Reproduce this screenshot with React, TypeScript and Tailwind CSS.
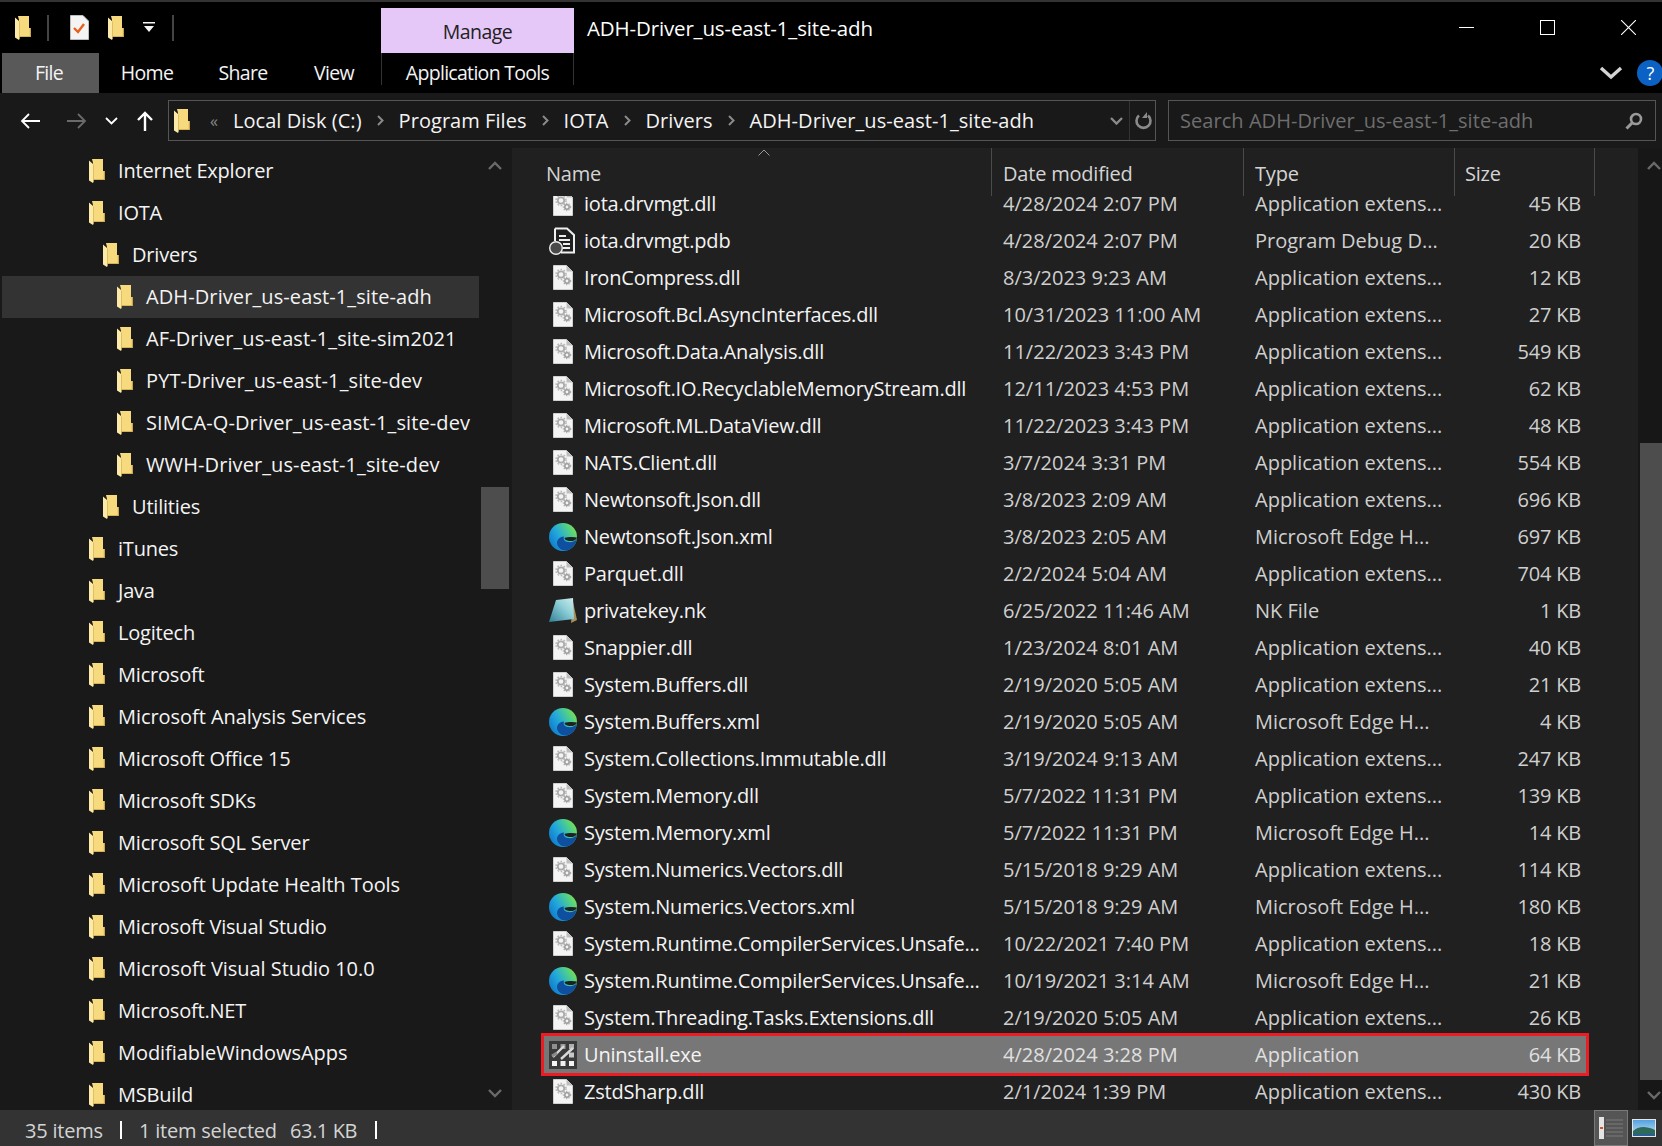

import React from "react";

const Folder = ({ className = "" }: { className?: string }) => (
  <svg viewBox="0 0 16 24" className={className}>
    <path d="M3 0H14V12H16V21H4V4Z" fill="#f8da7e" />
    <path d="M14 12H16V21H4V20.2H14.8V12Z" fill="#c9a64e" />
    <path d="M0 1.5L4 5V24L0 21.5Z" fill="#fdeaa8" />
    <path d="M4 5V24L4.8 22.5V6Z" fill="#d8b85e" />
  </svg>
);

const Dll = () => (
  <svg viewBox="0 0 20 25" className="w-[20px] h-[25px]">
    <path d="M0.5 0.5H13.5L19.5 6.5V24.5H0.5Z" fill="#f4f4f4" stroke="#d0d0d0" />
    <path d="M13.5 0.5V6.5H19.5Z" fill="#bdbdbd" />
    <circle cx="8" cy="9.5" r="3.2" fill="none" stroke="#ababab" strokeWidth="1.8" />
    <circle cx="8" cy="9.5" r="5" fill="none" stroke="#b8b8b8" strokeWidth="1.6" strokeDasharray="1.6 1.6" />
    <circle cx="14" cy="16" r="2.2" fill="none" stroke="#9a9a9a" strokeWidth="1.5" />
    <circle cx="14" cy="16" r="3.6" fill="none" stroke="#acacac" strokeWidth="1.3" strokeDasharray="1.3 1.3" />
  </svg>
);

const Pdb = () => (
  <svg viewBox="0 0 28 28" className="w-[28px] h-[28px]">
    <path d="M6 1.5H18L25 8V25.5H12" fill="#202020" stroke="#efefef" strokeWidth="2" />
    <path d="M6 1.5V14" stroke="#efefef" strokeWidth="2" />
    <path d="M10 9H17M10 13H21M14 17H21M14 21H21" stroke="#efefef" strokeWidth="2" />
    <circle cx="7" cy="21" r="6.3" fill="#4a4a4a" stroke="#efefef" strokeWidth="1.4" />
  </svg>
);

const Edge = () => (
  <svg viewBox="0 0 28 28" className="w-[28px] h-[28px]">
    <defs>
      <linearGradient id="edgeA" x1="0" y1="0.9" x2="1" y2="0.3">
        <stop offset="0" stopColor="#0c6fc6" />
        <stop offset="0.45" stopColor="#22a8dc" />
        <stop offset="0.8" stopColor="#4fcf8a" />
        <stop offset="1" stopColor="#7ade52" />
      </linearGradient>
    </defs>
    <circle cx="14" cy="14" r="14" fill="url(#edgeA)" />
    <path d="M28 15.5C26 19 22 19.5 18.5 19C15.5 18.5 14 16.5 15 13.5C11 13.5 8 16.5 8 20C8 24 12.5 28 17 27.5C22 27 27 22.5 28 15.5Z" fill="#0f4f9f" />
    <path d="M28 14.5C27 17.5 23.5 18.5 20 18C17.5 17.5 15.5 16.5 15.5 15C18 14 24 13.5 28 14.5Z" fill="#202020" />
  </svg>
);

const Nk = () => (
  <svg viewBox="0 0 28 26" className="w-[28px] h-[26px]">
    <defs>
      <linearGradient id="nkA" x1="0" y1="1" x2="1" y2="0">
        <stop offset="0" stopColor="#2f7f96" />
        <stop offset="0.6" stopColor="#8fd0d8" />
        <stop offset="1" stopColor="#d2ecee" />
      </linearGradient>
    </defs>
    <path d="M24 4L28 22L22 25Z" fill="#a8905e" />
    <path d="M7 2L24 0L25 21L0 24Z" fill="url(#nkA)" />
  </svg>
);

const Uninstall = () => (
  <svg viewBox="0 0 28 28" className="w-[28px] h-[28px]">
    <rect width="28" height="28" fill="#3a3a3a" />
    <rect x="3" y="3" width="5" height="5" fill="#8f8f8f" />
    <rect x="11.5" y="3" width="5" height="5" fill="#9a9a9a" />
    <rect x="20" y="3" width="5" height="5" fill="#b0b0b0" />
    <rect x="20" y="11.5" width="5" height="5" fill="#c8c8c8" />
    <rect x="3" y="20" width="5" height="5" fill="#f4f4f4" />
    <rect x="11.5" y="20" width="5" height="5" fill="#f0f0f0" />
    <rect x="20" y="20" width="5" height="5" fill="#f4f4f4" />
    <path d="M4 16L15 5M12 18L24 7" stroke="#d8d8d8" strokeWidth="2.4" />
    <path d="M3 15L8 12" stroke="#8a8a8a" strokeWidth="3" />
  </svg>
);

type Kind = "dll" | "pdb" | "edge" | "nk" | "exe";
const files: [Kind, string, string, string, string][] = [
  ["dll", "iota.drvmgt.dll", "4/28/2024 2:07 PM", "Application extens...", "45 KB"],
  ["pdb", "iota.drvmgt.pdb", "4/28/2024 2:07 PM", "Program Debug D...", "20 KB"],
  ["dll", "IronCompress.dll", "8/3/2023 9:23 AM", "Application extens...", "12 KB"],
  ["dll", "Microsoft.Bcl.AsyncInterfaces.dll", "10/31/2023 11:00 AM", "Application extens...", "27 KB"],
  ["dll", "Microsoft.Data.Analysis.dll", "11/22/2023 3:43 PM", "Application extens...", "549 KB"],
  ["dll", "Microsoft.IO.RecyclableMemoryStream.dll", "12/11/2023 4:53 PM", "Application extens...", "62 KB"],
  ["dll", "Microsoft.ML.DataView.dll", "11/22/2023 3:43 PM", "Application extens...", "48 KB"],
  ["dll", "NATS.Client.dll", "3/7/2024 3:31 PM", "Application extens...", "554 KB"],
  ["dll", "Newtonsoft.Json.dll", "3/8/2023 2:09 AM", "Application extens...", "696 KB"],
  ["edge", "Newtonsoft.Json.xml", "3/8/2023 2:05 AM", "Microsoft Edge H...", "697 KB"],
  ["dll", "Parquet.dll", "2/2/2024 5:04 AM", "Application extens...", "704 KB"],
  ["nk", "privatekey.nk", "6/25/2022 11:46 AM", "NK File", "1 KB"],
  ["dll", "Snappier.dll", "1/23/2024 8:01 AM", "Application extens...", "40 KB"],
  ["dll", "System.Buffers.dll", "2/19/2020 5:05 AM", "Application extens...", "21 KB"],
  ["edge", "System.Buffers.xml", "2/19/2020 5:05 AM", "Microsoft Edge H...", "4 KB"],
  ["dll", "System.Collections.Immutable.dll", "3/19/2024 9:13 AM", "Application extens...", "247 KB"],
  ["dll", "System.Memory.dll", "5/7/2022 11:31 PM", "Application extens...", "139 KB"],
  ["edge", "System.Memory.xml", "5/7/2022 11:31 PM", "Microsoft Edge H...", "14 KB"],
  ["dll", "System.Numerics.Vectors.dll", "5/15/2018 9:29 AM", "Application extens...", "114 KB"],
  ["edge", "System.Numerics.Vectors.xml", "5/15/2018 9:29 AM", "Microsoft Edge H...", "180 KB"],
  ["dll", "System.Runtime.CompilerServices.Unsafe...", "10/22/2021 7:40 PM", "Application extens...", "18 KB"],
  ["edge", "System.Runtime.CompilerServices.Unsafe...", "10/19/2021 3:14 AM", "Microsoft Edge H...", "21 KB"],
  ["dll", "System.Threading.Tasks.Extensions.dll", "2/19/2020 5:05 AM", "Application extens...", "26 KB"],
  ["exe", "Uninstall.exe", "4/28/2024 3:28 PM", "Application", "64 KB"],
  ["dll", "ZstdSharp.dll", "2/1/2024 1:39 PM", "Application extens...", "430 KB"],
];

const tree: [string, string][] = [
  ["pl-[87px]", "Internet Explorer"],
  ["pl-[87px]", "IOTA"],
  ["pl-[101px]", "Drivers"],
  ["pl-[115px] tracking-[0.1px]", "ADH-Driver_us-east-1_site-adh"],
  ["pl-[115px] tracking-[0.1px]", "AF-Driver_us-east-1_site-sim2021"],
  ["pl-[115px] tracking-[0.1px]", "PYT-Driver_us-east-1_site-dev"],
  ["pl-[115px] tracking-[0.1px]", "SIMCA-Q-Driver_us-east-1_site-dev"],
  ["pl-[115px] tracking-[0.1px]", "WWH-Driver_us-east-1_site-dev"],
  ["pl-[101px]", "Utilities"],
  ["pl-[87px]", "iTunes"],
  ["pl-[87px]", "Java"],
  ["pl-[87px]", "Logitech"],
  ["pl-[87px]", "Microsoft"],
  ["pl-[87px] tracking-[-0.05px]", "Microsoft Analysis Services"],
  ["pl-[87px]", "Microsoft Office 15"],
  ["pl-[87px]", "Microsoft SDKs"],
  ["pl-[87px]", "Microsoft SQL Server"],
  ["pl-[87px] tracking-[-0.05px]", "Microsoft Update Health Tools"],
  ["pl-[87px]", "Microsoft Visual Studio"],
  ["pl-[87px] tracking-[-0.05px]", "Microsoft Visual Studio 10.0"],
  ["pl-[87px]", "Microsoft.NET"],
  ["pl-[87px] tracking-[-0.05px]", "ModifiableWindowsApps"],
  ["pl-[87px]", "MSBuild"],
];

const Chevron = ({ up, color = "#6a6a6a" }: { up?: boolean; color?: string }) => (
  <svg viewBox="0 0 14 9" className="w-[14px] h-[9px]">
    <path d={up ? "M1 8L7 2L13 8" : "M1 1L7 7L13 1"} fill="none" stroke={color} strokeWidth="2.4" />
  </svg>
);

const Crumb = () => (
  <svg viewBox="0 0 7 11" className="w-[7px] h-[11px] mx-[15px]">
    <path d="M1 1L5.5 5.5L1 10" fill="none" stroke="#8a8a8a" strokeWidth="2" />
  </svg>
);

const Icon = ({ kind }: { kind: Kind }) =>
  kind === "dll" ? <Dll /> : kind === "pdb" ? <Pdb /> : kind === "edge" ? <Edge /> : kind === "nk" ? <Nk /> : <Uninstall />;

export default function App() {
  return (
    <div className="w-[1662px] h-[1146px] overflow-hidden bg-black flex flex-col text-[20px] tracking-[-0.2px] font-['Open_Sans','Noto_Sans',sans-serif] text-[#f4f4f4] border-t-2 border-[#333333]">
      {/* title row */}
      <div className="h-[51px] flex items-start shrink-0">
        <div className="w-[381px] h-[51px] flex items-center pl-[15px]">
          <Folder className="w-[16px] h-[24px]" />
          <div className="ml-[16px] w-[2px] h-[26px] bg-[#444444]" />
          <svg viewBox="0 0 19 25" className="ml-[21px] w-[19px] h-[25px]">
            <path d="M0.5 0.5H13L18.5 6V24.5H0.5Z" fill="#f4f4f4" stroke="#bdbdbd" />
            <path d="M4 13L8 17L14 9" fill="none" stroke="#e8601c" strokeWidth="2.4" />
          </svg>
          <Folder className="ml-[19px] w-[16px] h-[24px]" />
          <svg viewBox="0 0 12 11" className="ml-[19px] w-[12px] h-[11px]">
            <path d="M0 0H12V1.5H0ZM1 4H11L6 10Z" fill="#f4f4f4" />
          </svg>
          <div className="ml-[17px] w-[2px] h-[26px] bg-[#444444]" />
        </div>
        <div className="mt-[6px] w-[193px] h-[45px] bg-[#e6c8f8] text-[#222222] flex items-center justify-center pt-[2px] text-[19.5px] tracking-[-0.55px]">Manage</div>
        <div className="ml-[13px] mt-[11px] text-white text-[20.5px] tracking-[-0.15px]">ADH-Driver_us-east-1_site-adh</div>
        <div className="ml-auto flex items-center h-[51px] pr-[26px]">
          <div className="w-[15px] h-[1.5px] bg-white" />
          <div className="ml-[66px] w-[15px] h-[15px] border border-white" />
          <svg viewBox="0 0 15 15" className="ml-[66px] w-[15px] h-[15px]">
            <path d="M0 0L15 15M15 0L0 15" stroke="#fff" strokeWidth="1.1" />
          </svg>
        </div>
      </div>
      {/* tabs */}
      <div className="h-[40px] flex items-stretch shrink-0 pl-[2px] text-[19.5px] tracking-[-0.7px]">
        <div className="w-[97px] bg-[#595959] flex items-center justify-center pr-[3px]">File</div>
        <div className="w-[94px] flex items-center justify-center pl-[2px]">Home</div>
        <div className="w-[100px] flex items-center justify-center">Share</div>
        <div className="w-[82px] flex items-center justify-center">View</div>
        <div className="ml-[6px] w-[193px] h-[32px] mb-auto border-x border-[#333333] flex items-center justify-center pt-[7px]">Application Tools</div>
        <div className="ml-auto flex items-center gap-[14px] pr-0 mr-[-1px]">
          <svg viewBox="0 0 24 16" className="w-[24px] h-[16px]">
            <path d="M2 3L12 12L22 3" fill="none" stroke="#d4d4d4" strokeWidth="3.4" />
          </svg>
          <div className="w-[26px] h-[26px] rounded-full bg-[#0b62c4] text-white flex items-center justify-center text-[18px]">?</div>
        </div>
      </div>
      {/* address row */}
      <div className="h-[55px] bg-[#191919] flex items-center shrink-0 pl-[20px] pr-[6px] tracking-[0.05px]">
        <svg viewBox="0 0 20 16" className="w-[20px] h-[16px]">
          <path d="M20 8H2M9 1L2 8L9 15" fill="none" stroke="#fff" strokeWidth="1.8" />
        </svg>
        <svg viewBox="0 0 20 16" className="ml-[27px] w-[20px] h-[16px]">
          <path d="M0 8H18M11 1L18 8L11 15" fill="none" stroke="#6a6a6a" strokeWidth="1.8" />
        </svg>
        <svg viewBox="0 0 13 8" className="ml-[18px] w-[13px] h-[8px]">
          <path d="M1 1L6.5 6.5L12 1" fill="none" stroke="#fff" strokeWidth="1.8" />
        </svg>
        <svg viewBox="0 0 16 20" className="ml-[19px] w-[16px] h-[20px]">
          <path d="M8 20V2M1 9L8 2L15 9" fill="none" stroke="#fff" strokeWidth="2.4" />
        </svg>
        <div className="ml-[15px] w-[988px] h-[41px] border border-[#555555] flex items-center">
          <Folder className="ml-[5px] w-[16px] h-[24px] shrink-0" />
          <span className="ml-[20px] text-[#8a8a8a] text-[16px] leading-none">«</span>
          <span className="ml-[15px]">Local Disk (C:)</span>
          <Crumb />
          <span>Program Files</span>
          <Crumb />
          <span>IOTA</span>
          <Crumb />
          <span>Drivers</span>
          <Crumb />
          <span>ADH-Driver_us-east-1_site-adh</span>
          <div className="ml-auto flex items-center h-full">
            <div className="mr-[6px]">
              <svg viewBox="0 0 13 8" className="w-[13px] h-[8px]">
                <path d="M1 1L6.5 6.5L12 1" fill="none" stroke="#8a8a8a" strokeWidth="2.4" />
              </svg>
            </div>
            <div className="h-full w-[26px] border-l border-[#333333] flex items-center justify-center">
              <svg viewBox="0 0 18 18" className="w-[18px] h-[18px]">
                <path d="M5 3.5A7 7 0 1 0 14 3.5" fill="none" stroke="#8a8a8a" strokeWidth="2.6" />
                <path d="M13 0V6H8" fill="#8a8a8a" />
              </svg>
            </div>
          </div>
        </div>
        <div className="ml-[12px] flex-1 h-[41px] border border-[#555555] flex items-center pl-[11px] pr-[12px] text-[#6e6e6e]">
          <span>Search ADH-Driver_us-east-1_site-adh</span>
          <svg viewBox="0 0 18 18" className="ml-auto w-[18px] h-[18px]">
            <circle cx="11" cy="7" r="5" fill="none" stroke="#9a9a9a" strokeWidth="2.6" />
            <path d="M7 11L1.5 16.5" stroke="#9a9a9a" strokeWidth="3" />
          </svg>
        </div>
      </div>
      {/* main */}
      <div className="flex-1 min-h-0 flex">
        {/* tree */}
        <div className="w-[512px] h-full flex bg-[#191919] pl-[2px] overflow-hidden">
          <div className="w-[477px] h-full pt-[2px] overflow-hidden">
            {tree.map(([indent, name], i) => (
              <div key={name} className={`h-[42px] flex items-center ${indent} ${i === 3 ? "bg-[#333333]" : ""}`}>
                <Folder className="w-[16px] h-[24px] shrink-0" />
                <span className="ml-[13px] whitespace-nowrap">{name}</span>
              </div>
            ))}
          </div>
          <div className="w-[31px] h-full flex flex-col items-center justify-between pt-[13px] pb-[12px]">
            <Chevron up />
            <div className="absolute top-[487px] w-[28px] h-[102px] bg-[#4d4d4d]" />
            <Chevron />
          </div>
        </div>
        {/* list */}
        <div className="w-[1126px] h-full bg-[#202020] flex flex-col overflow-hidden relative">
          <div className="h-[48px] shrink-0 flex text-[#d4d4d4] relative z-10 bg-[#202020]">
            <div className="w-[480px] pl-[34px] pt-[11px] border-r border-[#4a4a4a]">Name</div>
            <div className="w-[252px] pl-[11px] pt-[11px] border-r border-[#4a4a4a]">Date modified</div>
            <div className="w-[211px] pl-[11px] pt-[11px] border-r border-[#4a4a4a]">Type</div>
            <div className="w-[140px] pl-[10px] pt-[11px] border-r border-[#4a4a4a]">Size</div>
            <svg viewBox="0 0 12 7" className="absolute left-[246px] top-[1px] w-[12px] h-[7px]">
              <path d="M0.5 6.5L6 1L11.5 6.5" fill="none" stroke="#9a9a9a" strokeWidth="1" />
            </svg>
          </div>
          <div className="flex-1 min-h-0 overflow-hidden pl-[32px] pr-[52px]">
            <div className="-mt-[11px]">
              {files.map(([kind, name, date, type, size]) => {
                const sel = kind === "exe";
                return (
                  <div key={name + date} className={`h-[37px] flex items-center whitespace-nowrap ${sel ? "bg-[#777777] outline-[3px] outline-[#ed1c24]" : ""}`}>
                    <div className="w-[40px] shrink-0 flex justify-center pr-[2px]">
                      <Icon kind={kind} />
                    </div>
                    <div className="w-[419px] shrink-0">{name}</div>
                    <div className={`w-[252px] shrink-0 tracking-[0px] ${sel ? "text-[#e0e0e0]" : "text-[#cfcfcf]"}`}>{date}</div>
                    <div className={`w-[210px] shrink-0 tracking-[0px] ${sel ? "text-[#e0e0e0]" : "text-[#cfcfcf]"}`}>{type}</div>
                    <div className={`flex-1 text-right pr-[5px] ${sel ? "text-[#e0e0e0]" : "text-[#cfcfcf]"}`}>{size}</div>
                  </div>
                );
              })}
            </div>
          </div>
        </div>
        {/* list scrollbar */}
        <div className="flex-1 h-full bg-[#171717] flex flex-col">
          <div className="h-[295px] flex justify-end pr-[1px] pt-[13px]">
            <Chevron up />
          </div>
          <div className="h-[637px] ml-[2px] bg-[#4d4d4d]" />
          <div className="flex-1 flex justify-end items-center pr-[1px]">
            <Chevron />
          </div>
        </div>
      </div>
      {/* status */}
      <div className="h-[36px] shrink-0 bg-[#333333] flex items-center pl-[25px] text-[#d4d4d4]">
        <span className="pt-[5px]">35 items</span>
        <div className="ml-[17px] mt-[4px] w-[2px] h-[18px] bg-white" />
        <span className="ml-[17px] pt-[5px]">1 item selected</span>
        <span className="ml-[13px] pt-[5px] tracking-[-0.4px]">63.1 KB</span>
        <div className="ml-[18px] mt-[4px] w-[2px] h-[18px] bg-white" />
        <div className="ml-auto mr-[6px] flex items-center h-full gap-[4px]">
          <div className="w-[34px] h-full bg-[#555555] border border-[#7a7a7a] flex items-center justify-center">
            <svg viewBox="0 0 24 24" className="w-[24px] h-[24px]">
              <rect x="0" y="1" width="5" height="22" fill="#e4e4e4" />
              <rect x="1" y="11" width="3" height="2" fill="#d2542a" />
              <path d="M7 4H24M7 8H24M7 12H24M7 16H24M7 20H24" stroke="#7d7d7d" strokeWidth="1" />
            </svg>
          </div>
          <svg viewBox="0 0 24 18" className="w-[24px] h-[18px]">
            <defs>
              <linearGradient id="skyA" x1="0" y1="0" x2="0" y2="1">
                <stop offset="0" stopColor="#4f9fe0" />
                <stop offset="1" stopColor="#cfe6f5" />
              </linearGradient>
            </defs>
            <rect x="0.5" y="0.5" width="23" height="17" fill="url(#skyA)" stroke="#e6e6e6" />
            <path d="M1 12C6 8 12 6 23 11V17H1Z" fill="#2e6a5a" />
            <path d="M1 15H23V17H1Z" fill="#2a5f96" />
          </svg>
        </div>
      </div>
    </div>
  );
}
